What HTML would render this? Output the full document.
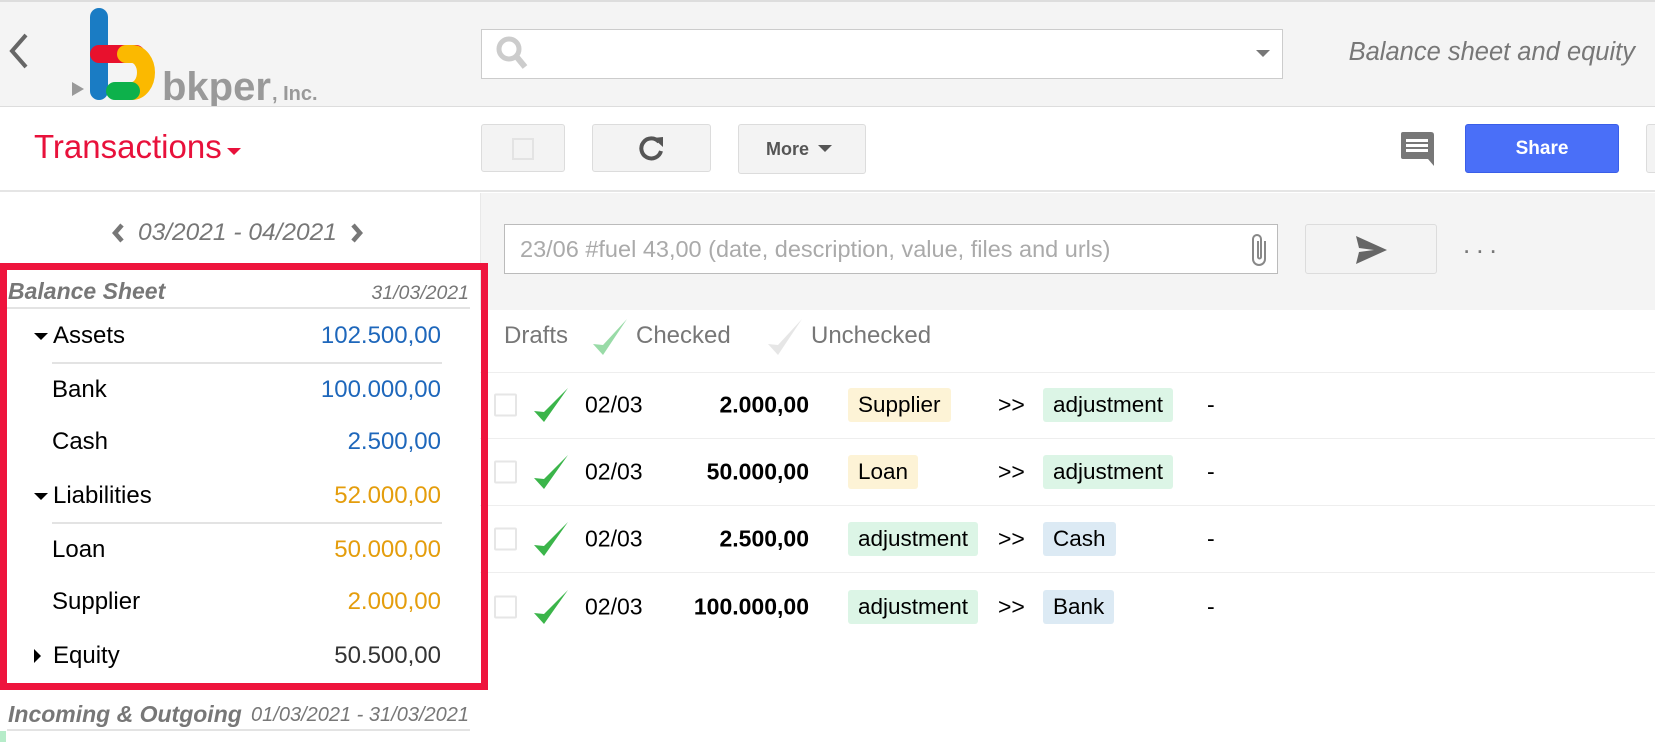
<!DOCTYPE html>
<html><head><meta charset="utf-8"><style>
*{margin:0;padding:0;box-sizing:border-box}
body{width:1655px;height:742px;position:relative;overflow:hidden;background:#fff;font-family:"Liberation Sans",sans-serif;color:#000}
.a{position:absolute}
.btn{position:absolute;background:#f3f3f3;border:1px solid #dcdcdc;border-radius:3px}
.row{position:absolute;left:0;width:480px;font-size:24px;line-height:30px}
.row .l{position:absolute}
.row .r{position:absolute;right:39px}
.tr{position:absolute;left:480px;right:0;height:67px;border-bottom:1px solid #eee;font-size:23px}
.tr>*{position:absolute;top:50%;transform:translateY(-50%)}
.tag{padding:4px 10px;border-radius:3px;font-size:22.5px}
.y{background:#fdf3d6}.g{background:#dcf5e6}.b{background:#dceaf4}
</style></head><body>
<!-- header -->
<div class="a" style="left:0;top:0;width:1655px;height:107px;background:#f4f4f4;border-top:2px solid #ddd;border-bottom:1px solid #ddd"></div>
<svg class="a" style="left:8px;top:33px" width="22" height="36" viewBox="0 0 22 36"><path d="M18 2 L4 18 L18 34" fill="none" stroke="#666" stroke-width="4"/></svg>
<!-- logo -->
<svg class="a" style="left:70px;top:6px" width="260" height="100" viewBox="0 0 260 100">
<polygon points="2,76 14,83 2,90" fill="#999"/>
<rect x="20" y="2" width="18" height="92" rx="9" fill="#1a7cc4"/>
<rect x="20" y="39" width="55" height="18" rx="9" fill="#e8112d"/>
<path d="M56 48 H62 A14 18.5 0 0 1 62 85 H56" fill="none" stroke="#fbb900" stroke-width="18" stroke-linecap="round"/>
<rect x="36" y="76" width="34" height="18" rx="9" fill="#0db14b"/>
<text x="92" y="94" font-family="Liberation Sans" font-weight="bold" font-size="40" fill="#999">bkper</text>
<text x="202" y="94" font-family="Liberation Sans" font-weight="bold" font-size="20" fill="#999">, Inc.</text>
</svg>
<div class="a" style="left:481px;top:29px;width:802px;height:50px;background:#fff;border:1px solid #ccc"></div>
<svg class="a" style="left:496px;top:36px" width="32" height="34" viewBox="0 0 32 34"><circle cx="13" cy="13" r="10" fill="none" stroke="#ccc" stroke-width="5"/><path d="M20 20 L29 31" stroke="#ccc" stroke-width="6"/></svg>
<div class="a" style="left:1256px;top:50px;border-left:7px solid transparent;border-right:7px solid transparent;border-top:7px solid #777"></div>
<div class="a" style="right:20px;top:38px;font-size:25.5px;font-style:italic;color:#777">Balance sheet and equity</div>
<!-- toolbar -->
<div class="a" style="left:0;top:190px;width:1655px;border-top:2px solid #e5e5e5"></div>
<div class="a" style="left:34px;top:128px;font-size:33px;color:#e8113b">Transactions</div>
<div class="a" style="left:227px;top:148px;border-left:7px solid transparent;border-right:7px solid transparent;border-top:7px solid #e8113b"></div>
<div class="btn" style="left:481px;top:124px;width:84px;height:48px"><div class="a" style="left:30px;top:13px;width:22px;height:22px;border:2px solid #e3e3e3"></div></div>
<div class="btn" style="left:592px;top:124px;width:119px;height:48px"><svg class="a" style="left:44px;top:10px" width="30" height="28" viewBox="0 0 30 28"><path d="M22 7 A10 10 0 1 0 24 16" fill="none" stroke="#555" stroke-width="4"/><polygon points="16,3 26,2 26,12" fill="#555"/></svg></div>
<div class="btn" style="left:738px;top:124px;width:128px;height:50px;font-size:18px;font-weight:bold;color:#555;line-height:48px;padding-left:27px">More</div>
<div class="a" style="left:818px;top:145px;border-left:7px solid transparent;border-right:7px solid transparent;border-top:7px solid #555"></div>
<svg class="a" style="left:1399px;top:131px" width="36" height="36" viewBox="0 0 36 36"><path d="M2 3 Q2 1 4 1 H32 Q35 1 35 4 V35 L29 28 H4 Q2 28 2 26Z" fill="#777"/><rect x="7" y="8" width="22" height="3" fill="#fff"/><rect x="7" y="13" width="22" height="3" fill="#fff"/><rect x="7" y="18" width="22" height="3" fill="#fff"/></svg>
<div class="a" style="left:1465px;top:124px;width:154px;height:49px;background:#4a6ff8;border:1px solid #3a5ee8;border-radius:3px;color:#fff;font-weight:bold;font-size:19px;text-align:center;line-height:47px">Share</div>
<div class="btn" style="left:1646px;top:124px;width:30px;height:49px"></div>
<!-- right panel -->
<div class="a" style="left:480px;top:193px;width:1175px;height:117px;background:#f4f4f4;border-left:1px solid #e8e8e8"></div>
<div class="a" style="left:504px;top:224px;width:774px;height:50px;background:#fff;border:1px solid #bbb;font-size:23.5px;color:#aaa;line-height:48px;padding-left:15px">23/06 #fuel 43,00 (date, description, value, files and urls)</div>
<svg class="a" style="left:1249px;top:231px" width="22" height="38" viewBox="0 0 22 38"><path d="M16 10 V28 A6 6 0 0 1 4 28 V8 A4 4 0 0 1 12 8 V26 A1.5 1.5 0 0 1 9 26 V10" fill="none" stroke="#888" stroke-width="2"/></svg>
<div class="btn" style="left:1305px;top:224px;width:132px;height:50px"><svg class="a" style="left:50px;top:11px" width="32" height="28" viewBox="0 0 32 28"><polygon points="0,0 31,14 0,28 3,16 18,14 3,12" fill="#666"/></svg></div>
<div class="a" style="left:1463px;top:229px;font-size:26px;color:#777;letter-spacing:6px">...</div>
<div class="a" style="left:480px;top:310px;width:1175px;height:63px;border-bottom:1px solid #eee"></div>
<div class="a" style="left:504px;top:322px;font-size:24px;color:#777">Drafts</div>
<svg class="a" style="left:591px;top:318px" width="38" height="38" viewBox="0 0 38 38"><path d="M2 26 L12 37 L36 1 L12 27Z" fill="#99dba7"/></svg>
<div class="a" style="left:636px;top:322px;font-size:24px;color:#777">Checked</div>
<svg class="a" style="left:766px;top:318px" width="38" height="38" viewBox="0 0 38 38"><path d="M2 26 L12 37 L36 1 L12 27Z" fill="#e6e6e6"/></svg>
<div class="a" style="left:811px;top:322px;font-size:24px;color:#777">Unchecked</div>

<div class="tr" style="top:372px"><div style="left:14px;width:23px;height:23px;border:2px solid #e6e6e6;border-radius:2px"></div><svg style="left:53px" width="36" height="36" viewBox="0 0 36 36"><path d="M1 24 L11 35 L35 1 L11 25Z" fill="#3bb54a"/></svg><span style="left:105px">02/03</span><b style="right:846px">2.000,00</b><span class="tag y" style="left:368px">Supplier</span><span style="left:518px">&gt;&gt;</span><span class="tag g" style="left:563px">adjustment</span><span style="left:727px">-</span></div>
<div class="tr" style="top:439px"><div style="left:14px;width:23px;height:23px;border:2px solid #e6e6e6;border-radius:2px"></div><svg style="left:53px" width="36" height="36" viewBox="0 0 36 36"><path d="M1 24 L11 35 L35 1 L11 25Z" fill="#3bb54a"/></svg><span style="left:105px">02/03</span><b style="right:846px">50.000,00</b><span class="tag y" style="left:368px">Loan</span><span style="left:518px">&gt;&gt;</span><span class="tag g" style="left:563px">adjustment</span><span style="left:727px">-</span></div>
<div class="tr" style="top:506px"><div style="left:14px;width:23px;height:23px;border:2px solid #e6e6e6;border-radius:2px"></div><svg style="left:53px" width="36" height="36" viewBox="0 0 36 36"><path d="M1 24 L11 35 L35 1 L11 25Z" fill="#3bb54a"/></svg><span style="left:105px">02/03</span><b style="right:846px">2.500,00</b><span class="tag g" style="left:368px">adjustment</span><span style="left:518px">&gt;&gt;</span><span class="tag b" style="left:563px">Cash</span><span style="left:727px">-</span></div>
<div class="tr" style="top:573px;border-bottom:none"><div style="left:14px;width:23px;height:23px;border:2px solid #e6e6e6;border-radius:2px"></div><svg style="left:53px" width="36" height="36" viewBox="0 0 36 36"><path d="M1 24 L11 35 L35 1 L11 25Z" fill="#3bb54a"/></svg><span style="left:105px">02/03</span><b style="right:846px">100.000,00</b><span class="tag g" style="left:368px">adjustment</span><span style="left:518px">&gt;&gt;</span><span class="tag b" style="left:563px">Bank</span><span style="left:727px">-</span></div>
<!-- left panel -->
<div class="a" style="left:138px;top:219px;font-size:24.5px;font-style:italic;color:#777">03/2021 - 04/2021</div>
<svg class="a" style="left:110px;top:222px" width="16" height="22" viewBox="0 0 16 22"><path d="M12 3 L5 11 L12 19" fill="none" stroke="#777" stroke-width="4.5"/></svg>
<svg class="a" style="left:349px;top:222px" width="16" height="22" viewBox="0 0 16 22"><path d="M4 3 L11 11 L4 19" fill="none" stroke="#777" stroke-width="4.5"/></svg>
<div class="a" style="left:2px;top:307px;width:4px;height:161px;background:#a8d1ec"></div>
<div class="a" style="left:2px;top:468px;width:4px;height:160px;background:#fcefb6"></div>
<div class="a" style="left:2px;top:628px;width:4px;height:58px;background:#d3d3d3"></div>
<div class="a" style="left:0;top:263px;width:488px;height:427px;border:7px solid #ee143d"></div>
<div class="a" style="left:8px;top:278px;font-size:23px;font-weight:bold;font-style:italic;color:#777">Balance Sheet</div>
<div class="a" style="right:1186px;top:282px;font-size:19.5px;font-style:italic;color:#777">31/03/2021</div>
<div class="a" style="left:7px;top:307px;width:463px;border-top:2px solid #e3e3e3"></div>
<div class="a" style="left:34px;top:333px;border-left:7px solid transparent;border-right:7px solid transparent;border-top:7px solid #000"></div>
<div class="row" style="top:321px"><span class="l" style="left:53px">Assets</span><span class="r" style="color:#1e67bb">102.500,00</span></div>
<div class="a" style="left:52px;top:362px;width:390px;border-top:2px solid #e3e3e3"></div>
<div class="row" style="top:375px"><span class="l" style="left:52px">Bank</span><span class="r" style="color:#1e67bb">100.000,00</span></div>
<div class="row" style="top:427px"><span class="l" style="left:52px">Cash</span><span class="r" style="color:#1e67bb">2.500,00</span></div>
<div class="a" style="left:34px;top:493px;border-left:7px solid transparent;border-right:7px solid transparent;border-top:7px solid #000"></div>
<div class="row" style="top:481px"><span class="l" style="left:53px">Liabilities</span><span class="r" style="color:#e49d0c">52.000,00</span></div>
<div class="a" style="left:52px;top:522px;width:390px;border-top:2px solid #e3e3e3"></div>
<div class="row" style="top:535px"><span class="l" style="left:52px">Loan</span><span class="r" style="color:#e49d0c">50.000,00</span></div>
<div class="row" style="top:587px"><span class="l" style="left:52px">Supplier</span><span class="r" style="color:#e49d0c">2.000,00</span></div>
<div class="a" style="left:34px;top:649px;border-top:7px solid transparent;border-bottom:7px solid transparent;border-left:7px solid #000"></div>
<div class="row" style="top:641px"><span class="l" style="left:53px">Equity</span><span class="r" style="color:#333">50.500,00</span></div>
<div class="a" style="left:8px;top:701px;font-size:23px;font-weight:bold;font-style:italic;color:#777">Incoming &amp; Outgoing</div>
<div class="a" style="right:1186px;top:704px;font-size:20px;font-style:italic;color:#777">01/03/2021 - 31/03/2021</div>
<div class="a" style="left:7px;top:729px;width:463px;border-top:2px solid #e3e3e3"></div>
<div class="a" style="left:0;top:731px;width:6px;height:11px;background:#b6ecc9"></div>
</body></html>
